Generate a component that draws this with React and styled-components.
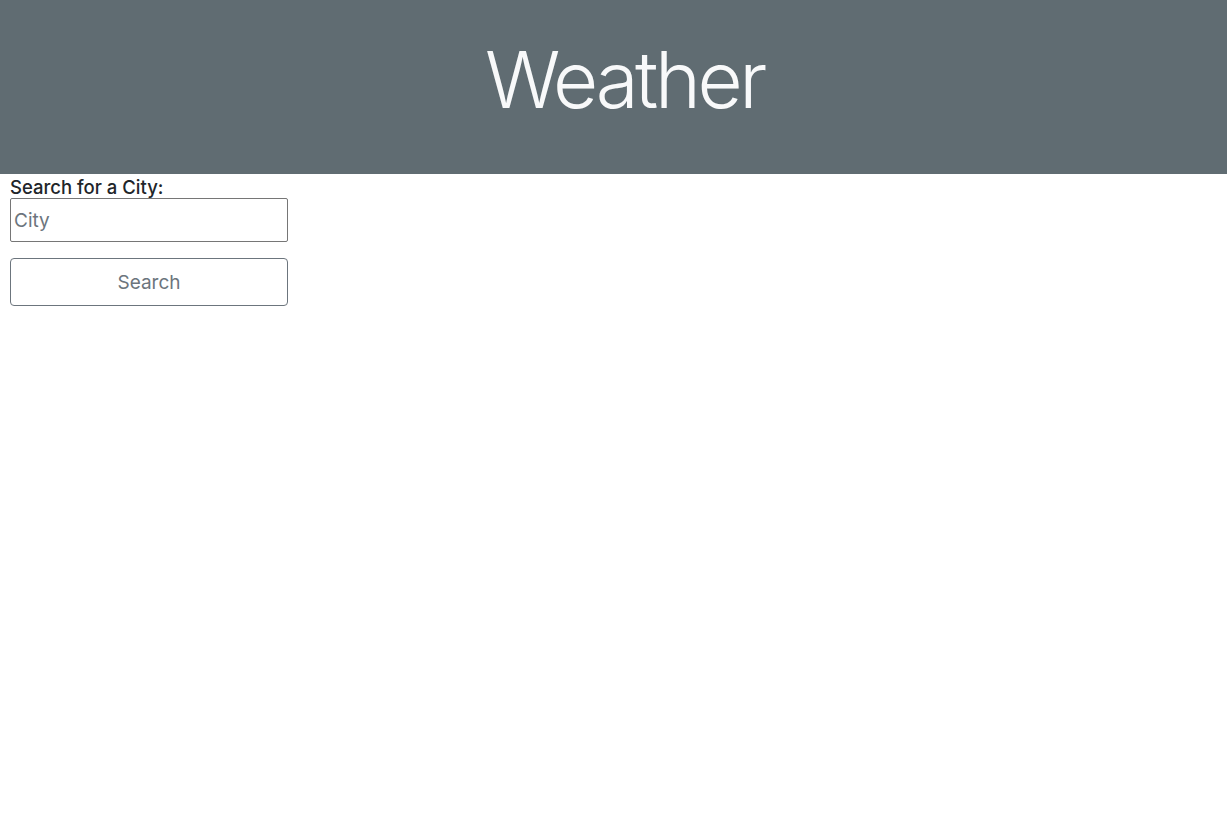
import React from "react";
import styled, { createGlobalStyle } from "styled-components";

const Global = createGlobalStyle`
  html, body { margin: 0; padding: 0; background: #fff; }
  body { font-family: Inter, "Noto Sans", sans-serif; color: #212529; }
  * { box-sizing: border-box; }
`;

const Header = styled.header`
  height: 174px;
  background: #606c72;
  display: flex;
  justify-content: center;
  align-items: center;
`;

const Title = styled.h1`
  margin: 0 0 0 22px;
  font-family: Inter, sans-serif;
  font-weight: 300;
  font-size: 78px;
  letter-spacing: -3.4px;
  color: #f8f9fa;
  line-height: 1;
  padding-bottom: 14px;
`;

const Form = styled.form`
  width: 278px;
  margin-left: 10px;
  display: flex;
  flex-direction: column;
`;

const Label = styled.label`
  font-size: 18.5px;
  font-weight: 500;
  line-height: 24px;
  padding-top: 1px;
  margin-bottom: -1px;
  color: #212529;
`;

const Input = styled.input`
  height: 44px;
  width: 100%;
  border: 1px solid #767676;
  border-radius: 2px;
  padding: 0 3px;
  font-family: Inter, sans-serif;
  font-size: 19px;
  color: #212529;
  &::placeholder { color: #6c757d; }
`;

const Button = styled.button`
  margin-top: 16px;
  height: 48px;
  width: 100%;
  background: #fff;
  border: 1px solid #6c757d;
  border-radius: 4px;
  color: #6c757d;
  font-family: Inter, sans-serif;
  font-size: 19px;
  cursor: pointer;
`;

export default function App() {
  return (
    <>
      <Global />
      <Header>
        <Title>Weather</Title>
      </Header>
      <Form onSubmit={(e) => e.preventDefault()}>
        <Label htmlFor="city">Search for a City:</Label>
        <Input id="city" placeholder="City" />
        <Button type="submit">Search</Button>
      </Form>
    </>
  );
}
